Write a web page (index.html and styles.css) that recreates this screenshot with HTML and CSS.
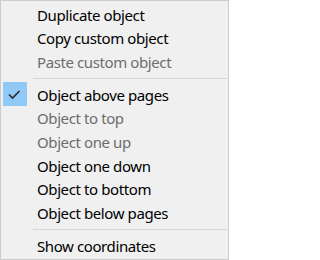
FILE: index.html
```html
<!DOCTYPE html>
<html>
<head>
<meta charset="utf-8">
<link rel="stylesheet" href="styles.css">
</head>
<body>
<div class="menu">
  <div class="item"><span class="check"></span><span class="label">Duplicate object</span></div>
  <div class="item"><span class="check"></span><span class="label">Copy custom object</span></div>
  <div class="item disabled"><span class="check"></span><span class="label">Paste custom object</span></div>
  <div class="sep"></div>
  <div class="item"><span class="check checked"><svg width="24" height="24" viewBox="0 0 24 24"><path d="M6 12.5 L9.5 16 L16.5 9" fill="none" stroke="#2b2b2b" stroke-width="1.6"/></svg></span><span class="label">Object above pages</span></div>
  <div class="item disabled"><span class="check"></span><span class="label">Object to top</span></div>
  <div class="item disabled"><span class="check"></span><span class="label">Object one up</span></div>
  <div class="item"><span class="check"></span><span class="label">Object one down</span></div>
  <div class="item"><span class="check"></span><span class="label">Object to bottom</span></div>
  <div class="item"><span class="check"></span><span class="label">Object below pages</span></div>
  <div class="sep"></div>
  <div class="item"><span class="check"></span><span class="label">Show coordinates</span></div>
</div>
</body>
</html>
```
FILE: styles.css
```css
html, body {
  margin: 0;
  padding: 0;
  background: #ffffff;
}
.menu {
  box-sizing: border-box;
  width: 229px;
  height: 260px;
  border: 1px solid #cccccc;
  background: #f0f0f0;
  padding: 1px 0 2px 2px;
  font-family: "Noto Sans", "Liberation Sans", sans-serif;
  font-size: 15px;
  letter-spacing: -0.4px;
  color: #000;
}
.item {
  display: flex;
  align-items: center;
  height: 23.67px;
}
.check {
  flex: 0 0 24px;
  width: 24px;
  height: 24px;
  display: flex;
  align-items: center;
  justify-content: center;
}
.check.checked {
  background: #90c8f6;
}
.label {
  margin-left: 10px;
  padding-top: 3px;
  white-space: nowrap;
  line-height: 1;
}
.disabled {
  color: #6d6d6d;
}
.sep {
  height: 1px;
  background: #d7d7d7;
  margin: 5px 1px 3px 30px;
}
```
